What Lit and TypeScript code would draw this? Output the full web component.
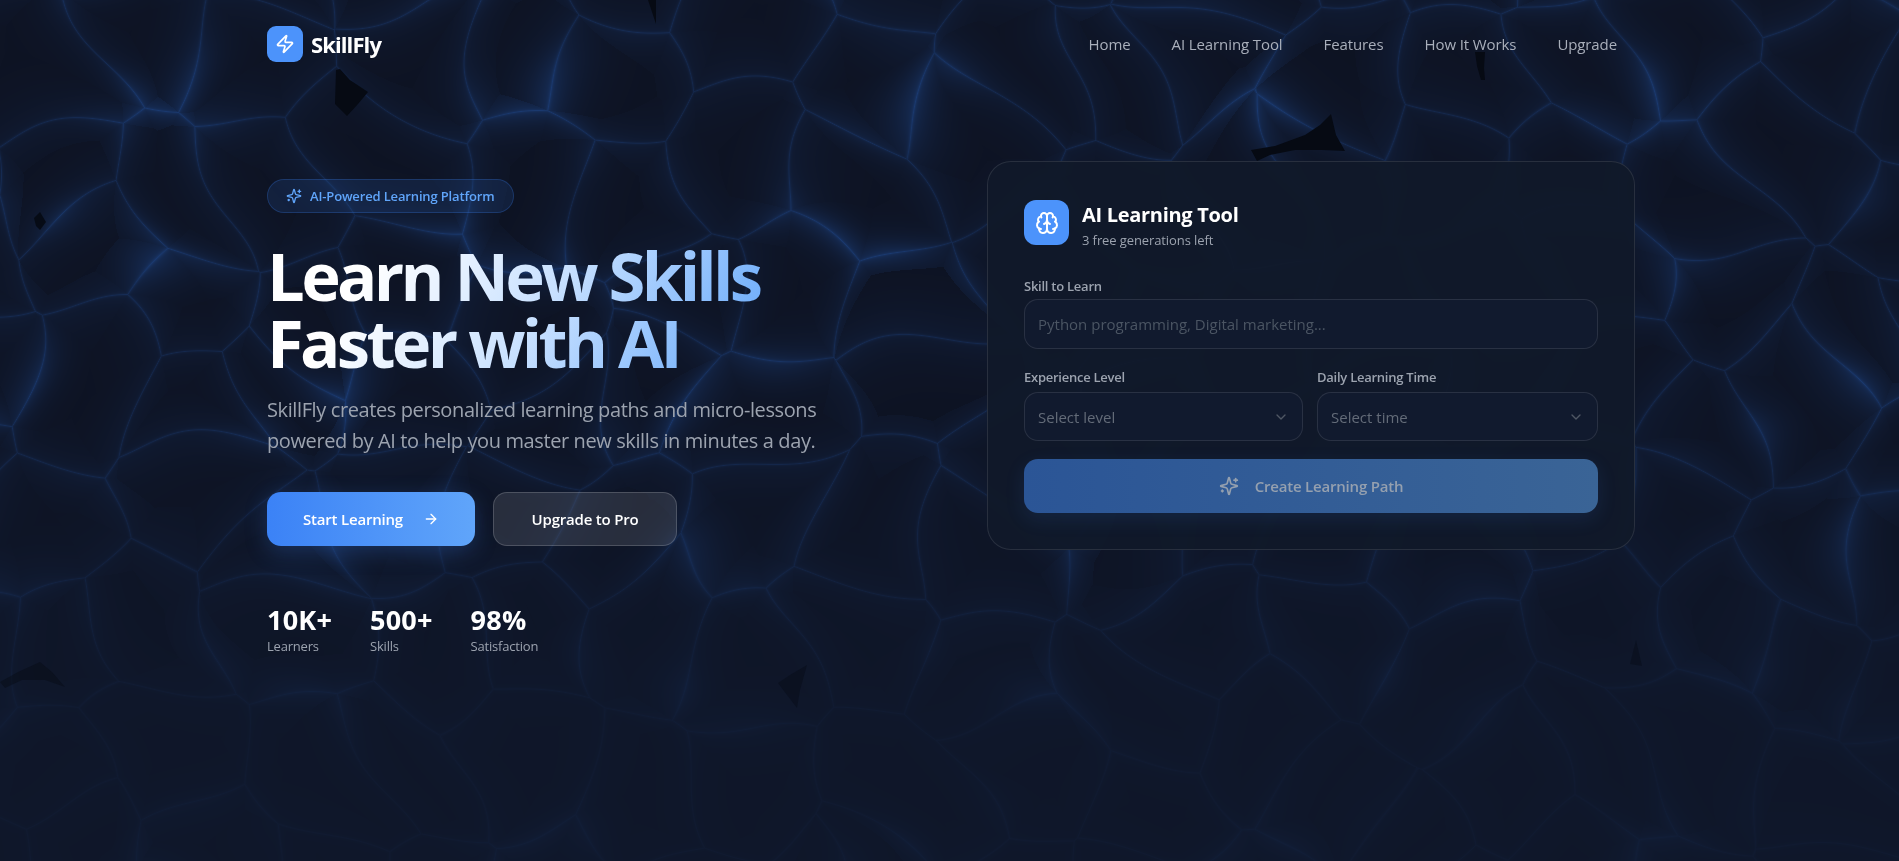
import { LitElement, html, css, svg } from 'lit';
import { customElement } from 'lit/decorators.js';

const W = 1899;
const H = 861;

const SHARDS = [
  { p: '336,70 340,69 350,80 368,92 358,104 347,116 335,104', o: 1 },
  { p: '648,0 656,0 656,24 652,12', o: 1 },
  { p: '1475,52 1485,52 1484,68 1485,80 1481,80 1477,66', o: 1 },
  { p: '1331,114 1336,135 1345,151 1322,150 1295,150 1270,155 1257,161 1251,150 1275,146 1305,135 1320,125', o: 1 },
  { p: '34,218 40,212 46,222 40,230 36,226', o: 0.9 },
  { p: '0,682 18,672 40,662 52,672 65,687 45,680 22,680 5,688', o: 0.45 },
  { p: '807,665 800,690 797,708 787,695 778,683 790,675', o: 0.4 },
  { p: '1636,640 1642,666 1630,664', o: 0.4 },
];

const sparkles = svg`<path d="M9.937 15.5A2 2 0 0 0 8.5 14.063l-6.135-1.582a.5.5 0 0 1 0-.962L8.5 9.936A2 2 0 0 0 9.937 8.5l1.582-6.135a.5.5 0 0 1 .963 0L14.063 8.5A2 2 0 0 0 15.5 9.937l6.135 1.581a.5.5 0 0 1 0 .964L15.5 14.063a2 2 0 0 0-1.437 1.437l-1.582 6.135a.5.5 0 0 1-.963 0z"/><path d="M20 3v4"/><path d="M22 5h-4"/><path d="M4 17v2"/><path d="M5 18H3"/>`;
const zap = svg`<path d="M4 14a1 1 0 0 1-.78-1.63l9.9-10.2a.5.5 0 0 1 .86.46l-1.92 6.02A1 1 0 0 0 13 10h7a1 1 0 0 1 .78 1.63l-9.9 10.2a.5.5 0 0 1-.86-.46l1.92-6.02A1 1 0 0 0 11 14z"/>`;
const brain = svg`<path d="M12 5a3 3 0 1 0-5.997.125 4 4 0 0 0-2.526 5.77 4 4 0 0 0 .556 6.588A4 4 0 1 0 12 18Z"/><path d="M12 5a3 3 0 1 1 5.997.125 4 4 0 0 1 2.526 5.77 4 4 0 0 1-.556 6.588A4 4 0 1 1 12 18Z"/><path d="M15 13a4.5 4.5 0 0 1-3-4 4.5 4.5 0 0 1-3 4"/><path d="M17.599 6.5a3 3 0 0 0 .399-1.375"/><path d="M6.003 5.125A3 3 0 0 0 6.401 6.5"/><path d="M3.477 10.896a4 4 0 0 1 .585-.396"/><path d="M19.938 10.5a4 4 0 0 1 .585.396"/><path d="M6 18a4 4 0 0 1-1.967-.516"/><path d="M19.967 17.484A4 4 0 0 1 18 18"/>`;
const arrow = svg`<path d="M5 12h14"/><path d="m12 5 7 7-7 7"/>`;
const chevron = svg`<path d="m6 9 6 6 6-6"/>`;

const icon = (body: unknown, size: number) => html`
  <svg width=${size} height=${size} viewBox="0 0 24 24" fill="none" stroke="currentColor" stroke-width="2" stroke-linecap="round" stroke-linejoin="round">${body}</svg>
`;

function hash(x: number, y: number, k: number) {
  const s = Math.sin(x * 127.1 + y * 311.7 + k * 74.7) * 43758.5453;
  return s - Math.floor(s);
}

// cracked-glass backdrop: warped cell noise, bright along the cell borders
function paintBackdrop(canvas: HTMLCanvasElement) {
  const ctx = canvas.getContext('2d')!;
  const img = ctx.createImageData(W, H);
  const cell = 118;
  for (let py = 0; py < H; py++) {
    const fade = py < 420 ? 1 : Math.max(0.2, 1 - ((py - 420) / 300) * 0.8);
    for (let px = 0; px < W; px++) {
      const wx = px + 20 * Math.sin(py * 0.011 + 1.3) + 12 * Math.sin(py * 0.029 + px * 0.013);
      const wy = py + 20 * Math.sin(px * 0.009 + 0.4) + 12 * Math.cos(px * 0.026 - py * 0.012);
      const gx = Math.floor(wx / cell);
      const gy = Math.floor(wy / cell);
      let f1 = 1e9;
      let f2 = 1e9;
      let ax = 0;
      let ay = 0;
      let bx = 0;
      let by = 0;
      for (let j = -1; j <= 1; j++) {
        for (let i = -1; i <= 1; i++) {
          const cx = (gx + i + 0.12 + 0.76 * hash(gx + i, gy + j, 1)) * cell;
          const cy = (gy + j + 0.12 + 0.76 * hash(gx + i, gy + j, 2)) * cell;
          const d = (wx - cx) ** 2 + (wy - cy) ** 2;
          if (d < f1) {
            f2 = f1; bx = ax; by = ay;
            f1 = d; ax = cx; ay = cy;
          } else if (d < f2) {
            f2 = d; bx = cx; by = cy;
          }
        }
      }
      // distance from the pixel to the border between the two nearest cells
      const edge = (f2 - f1) / (2 * Math.hypot(bx - ax, by - ay) + 0.001);
      const pulse = 0.5 + 0.5 * Math.sin(px * 0.017 + 2 * Math.sin(py * 0.014)) * Math.cos(py * 0.021 + 1.1);
      const line = Math.exp(-edge / 0.9) * 0.34;
      const glow = Math.exp(-edge / 16) * (0.04 + 0.44 * pulse ** 3);
      const haze = Math.exp(-edge / 40) * 0.14;
      const v = Math.min(1, line + glow + haze) * fade;
      const i4 = (py * W + px) * 4;
      img.data[i4] = 13 + 14 * v + (1 - fade) * 2;
      img.data[i4 + 1] = 18 + 42 * v + (1 - fade) * 5;
      img.data[i4 + 2] = 33 + 84 * v + (1 - fade) * 9;
      img.data[i4 + 3] = 255;
    }
  }
  ctx.putImageData(img, 0, 0);
}

@customElement('app-root')
export class AppRoot extends LitElement {
  static styles = css`
    :host {
      display: block;
      position: relative;
      width: 1899px;
      height: 861px;
      overflow: hidden;
      background: #0f172a;
      color: #fff;
      font-family: 'Open Sans', 'Noto Sans', sans-serif;
    }
    .backdrop {
      position: absolute;
      inset: 0;
    }
    .page {
      position: relative;
      padding-right: 15px;
    }
    .container {
      max-width: 1350px;
      margin: 0 auto;
    }
    nav {
      height: 88px;
      display: flex;
      align-items: center;
      justify-content: space-between;
    }
    .brand {
      display: flex;
      align-items: center;
      gap: 8px;
      font-size: 22px;
      font-weight: 700;
      letter-spacing: -0.9px;
    }
    .logo {
      width: 36px;
      height: 36px;
      border-radius: 9px;
      background: #4c93fb;
      display: flex;
      align-items: center;
      justify-content: center;
    }
    .links {
      display: flex;
      gap: 41px;
      font-size: 15px;
      letter-spacing: -0.1px;
      color: #a9afbb;
    }
    .hero {
      display: flex;
      justify-content: space-between;
      align-items: flex-start;
    }
    .intro {
      width: 640px;
      padding-top: 91px;
    }
    .badge {
      display: inline-flex;
      align-items: center;
      gap: 8px;
      height: 34px;
      box-sizing: border-box;
      padding: 0 18px;
      border-radius: 17px;
      background: rgba(59, 130, 246, 0.12);
      border: 1px solid rgba(59, 130, 246, 0.24);
      color: #60a5fa;
      font-size: 13px;
      font-weight: 600;
      letter-spacing: -0.15px;
    }
    h1 {
      margin: 29px 0 0;
      width: 500px;
      font-size: 67px;
      line-height: 67px;
      font-weight: 700;
      letter-spacing: -3.7px;
      background: linear-gradient(120deg, #fff 20%, #c7e0ff 55%, #60a5fa 100%);
      -webkit-background-clip: text;
      background-clip: text;
      color: transparent;
    }
    .lead {
      margin: 19px 0 0;
      font-size: 20px;
      line-height: 30.5px;
      letter-spacing: -0.39px;
      color: #9ca3af;
    }
    .actions {
      display: flex;
      gap: 18px;
      margin-top: 36px;
    }
    .btn {
      height: 54px;
      box-sizing: border-box;
      border-radius: 14px;
      display: flex;
      align-items: center;
      justify-content: center;
      font-size: 15px;
      font-weight: 600;
      letter-spacing: -0.2px;
    }
    .primary {
      width: 208px;
      gap: 20px;
      background: linear-gradient(90deg, #3b82f6, #60a5fa);
      box-shadow: 0 6px 22px rgba(59, 130, 246, 0.25);
    }
    .secondary {
      width: 184px;
      background: rgba(255, 255, 255, 0.11);
      border: 1px solid rgba(255, 255, 255, 0.17);
    }
    .stats {
      display: flex;
      gap: 38px;
      margin-top: 57px;
    }
    .num {
      font-size: 27px;
      line-height: 34px;
      font-weight: 700;
      letter-spacing: 0.2px;
    }
    .cap {
      font-size: 13px;
      line-height: 18px;
      letter-spacing: -0.2px;
      color: #9ca3af;
    }
    .card {
      width: 648px;
      height: 389px;
      box-sizing: border-box;
      margin: 73px -18px 0 0;
      padding: 38px 36px 0 36px;
      border-radius: 24px;
      border: 1px solid rgba(255, 255, 255, 0.1);
      background: rgba(17, 25, 42, 0.96);
    }
    .card-head {
      display: flex;
      align-items: flex-start;
      gap: 13px;
    }
    .tool-icon {
      width: 45px;
      height: 45px;
      border-radius: 12px;
      background: #4c93fb;
      display: flex;
      align-items: center;
      justify-content: center;
    }
    .head-text {
      padding-top: 2px;
    }
    .title {
      font-size: 20px;
      line-height: 26px;
      font-weight: 700;
      letter-spacing: -0.3px;
    }
    .sub {
      font-size: 13px;
      line-height: 24px;
      letter-spacing: -0.1px;
      color: #9ca3af;
    }
    label {
      display: block;
      font-size: 13px;
      line-height: 18px;
      font-weight: 600;
      letter-spacing: -0.25px;
      color: #9ca3af;
      margin-bottom: 4px;
    }
    .skill {
      margin-top: 25px;
    }
    input,
    .select {
      width: 100%;
      box-sizing: border-box;
      border-radius: 14px;
      border: 1px solid rgba(255, 255, 255, 0.1);
      background: #111a2e;
      font: inherit;
      font-size: 15px;
      padding: 0 13px;
    }
    input {
      height: 50px;
      display: block;
      outline: none;
      color: #fff;
    }
    input::placeholder {
      color: #4b5563;
    }
    .row {
      display: grid;
      grid-template-columns: 279px 281px;
      gap: 14px;
      margin-top: 19px;
    }
    .row label {
      margin-bottom: 6px;
    }
    .select {
      height: 49px;
      display: flex;
      align-items: center;
      justify-content: space-between;
      color: #636b78;
    }
    .chev {
      display: flex;
      color: #4f5764;
    }
    .create {
      margin-top: 18px;
      gap: 16px;
      border-radius: 14px;
      background: linear-gradient(90deg, #2b5596, #3a6496);
      box-shadow: 0 6px 20px rgba(59, 130, 246, 0.12);
      color: #95a0af;
    }
    .shards {
      position: absolute;
      inset: 0;
    }
  `;

  firstUpdated() {
    paintBackdrop(this.renderRoot.querySelector('canvas') as HTMLCanvasElement);
  }

  render() {
    return html`
      <canvas class="backdrop" width=${W} height=${H}></canvas>
      <svg class="shards" width=${W} height=${H} viewBox="0 0 ${W} ${H}">
        ${SHARDS.map((s) => svg`<polygon points=${s.p} fill="#060a13" opacity=${s.o}></polygon>`)}
      </svg>
      <div class="page">
        <div class="container">
          <nav>
            <div class="brand">
              <span class="logo">${icon(zap, 20)}</span>
              SkillFly
            </div>
            <div class="links">
              <span>Home</span>
              <span>AI Learning Tool</span>
              <span>Features</span>
              <span>How It Works</span>
              <span>Upgrade</span>
            </div>
          </nav>
          <section class="hero">
            <div class="intro">
              <div class="badge">${icon(sparkles, 16)} AI-Powered Learning Platform</div>
              <h1>Learn New Skills Faster with AI</h1>
              <p class="lead">
                SkillFly creates personalized learning paths and micro-lessons<br />
                powered by AI to help you master new skills in minutes a day.
              </p>
              <div class="actions">
                <div class="btn primary">Start Learning ${icon(arrow, 16)}</div>
                <div class="btn secondary">Upgrade to Pro</div>
              </div>
              <div class="stats">
                <div><div class="num">10K+</div><div class="cap">Learners</div></div>
                <div><div class="num">500+</div><div class="cap">Skills</div></div>
                <div><div class="num">98%</div><div class="cap">Satisfaction</div></div>
              </div>
            </div>
            <div class="card">
              <div class="card-head">
                <span class="tool-icon">${icon(brain, 24)}</span>
                <div class="head-text">
                  <div class="title">AI Learning Tool</div>
                  <div class="sub">3 free generations left</div>
                </div>
              </div>
              <div class="skill">
                <label>Skill to Learn</label>
                <input placeholder="Python programming, Digital marketing..." />
              </div>
              <div class="row">
                <div>
                  <label>Experience Level</label>
                  <div class="select">Select level <span class="chev">${icon(chevron, 16)}</span></div>
                </div>
                <div>
                  <label>Daily Learning Time</label>
                  <div class="select">Select time <span class="chev">${icon(chevron, 16)}</span></div>
                </div>
              </div>
              <div class="btn create">${icon(sparkles, 20)} Create Learning Path</div>
            </div>
          </section>
        </div>
      </div>
    `;
  }
}
